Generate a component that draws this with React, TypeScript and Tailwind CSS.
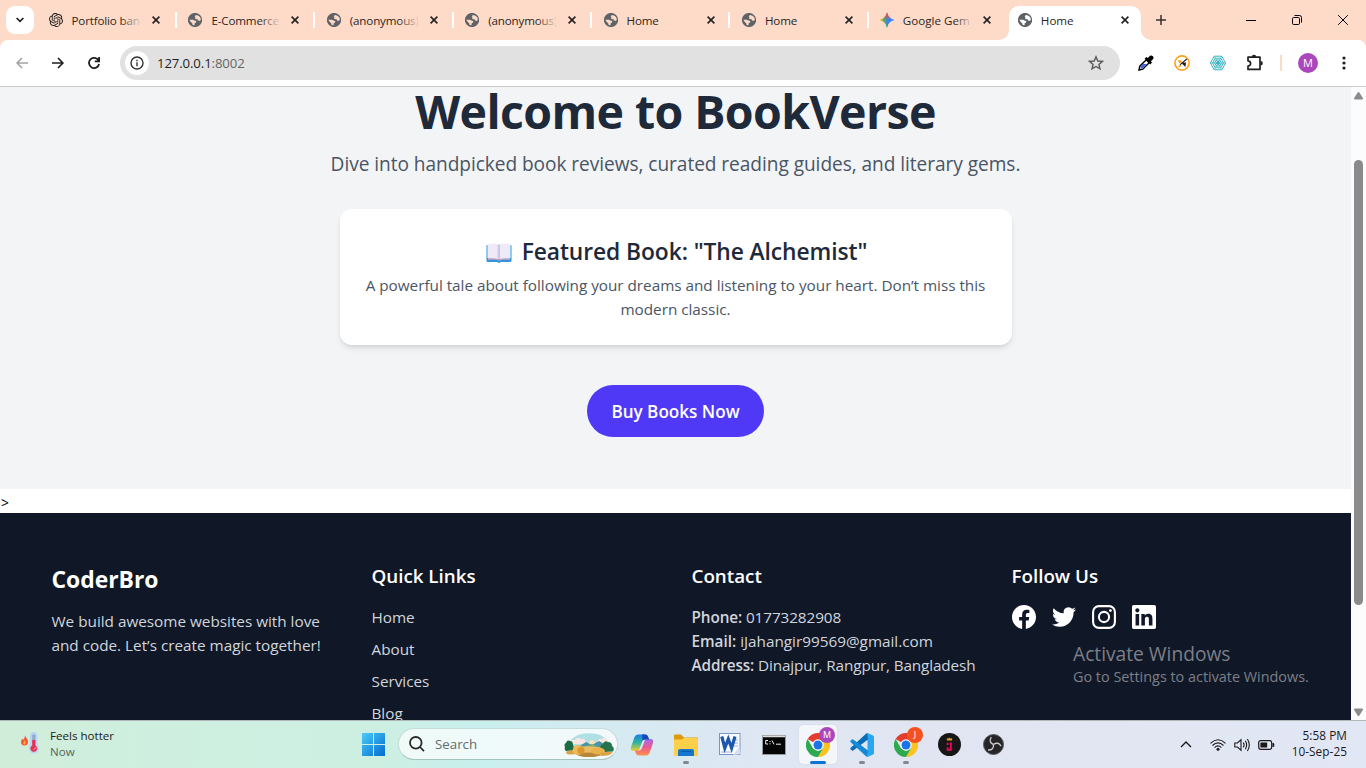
import type { ReactNode } from "react";
import { SiOpenai } from "react-icons/si";

function Globe({ light = "#fddbc8" }: { light?: string }) {
  return (
    <svg viewBox="0 0 14 14" className="size-[14px] shrink-0">
      <circle cx="7" cy="7" r="7.1" fill="#5f6368" />
      <g fill={light}>
        <path d="M8 2 10.6 2.7 12.4 4.6 12.9 7 11.2 7.9 9.9 7.3 9.6 6.2 7.6 5.9 6.8 5 7.7 4.2 6.6 3.2Z" />
        <path d="M1.3 6.8 4.9 6.7 6.4 7.4 8.3 7.9 8 9.4 6.7 10.2 6.5 12.2 4.6 11.9 4.4 10.4 3 9.3Z" />
      </g>
    </svg>
  );
}

function Gemini() {
  return (
    <svg viewBox="0 0 16 16" className="-ml-px size-[16px] shrink-0">
      <defs>
        <linearGradient id="gm" x1="0" y1="0.5" x2="1" y2="0.5">
          <stop offset="0" stopColor="#fbbc04" />
          <stop offset=".35" stopColor="#5aa469" />
          <stop offset=".55" stopColor="#3b82f6" />
          <stop offset="1" stopColor="#3186ff" />
        </linearGradient>
        <linearGradient id="gm2" x1="0.5" y1="0" x2="0.5" y2="1">
          <stop offset="0" stopColor="#f04a45" />
          <stop offset=".2" stopColor="#f04a45" />
          <stop offset=".45" stopColor="#f04a45" stopOpacity="0" />
          <stop offset=".7" stopColor="#22b45a" stopOpacity="0" />
          <stop offset="1" stopColor="#22b45a" />
        </linearGradient>
      </defs>
      <path d="M8 .3C9 4.6 11.4 7 15.7 8 11.4 9 9 11.4 8 15.7 7 11.4 4.6 9 .3 8 4.6 7 7 4.6 8 .3Z" fill="url(#gm)" />
      <path d="M8 .3C9 4.6 11.4 7 15.7 8 11.4 9 9 11.4 8 15.7 7 11.4 4.6 9 .3 8 4.6 7 7 4.6 8 .3Z" fill="url(#gm2)" />
    </svg>
  );
}

function Cross() {
  return (
    <svg viewBox="0 0 8 8" className="size-2 shrink-0" stroke="#222" strokeWidth="1.6">
      <path d="M.6.6 7.4 7.4M7.4.6.6 7.4" />
    </svg>
  );
}

function Tab({ icon, title, fade }: { icon: ReactNode; title: string; fade?: boolean }) {
  return (
    <div className="flex h-full w-[138.4px] shrink-0 items-center pl-[11.5px]">
      {icon}
      <div className="relative mt-px ml-[9px] w-[68px] overflow-hidden text-[11.6px] tracking-[-0.15px] whitespace-nowrap">
        {title}
        {fade && <span className="absolute inset-y-0 right-0 w-5 bg-linear-to-r from-[#fddbc8]/0 to-[#fddbc8]/90" />}
      </div>
      <div className="ml-[12px]">
        <Cross />
      </div>
      <div className="ml-auto h-4 w-0.5 bg-white" />
    </div>
  );
}

function TabStrip() {
  return (
    <div className="flex h-10 bg-[#fddbc8] text-[#2b2523]">
      <div className="mt-1.5 ml-1.5 flex size-7 shrink-0 items-center justify-center rounded-[9px] bg-white">
        <svg viewBox="0 0 8 6" className="w-2" fill="none" stroke="#1f1f1f" strokeWidth="1.7">
          <path d="M.6 1 4 4.4 7.4 1" />
        </svg>
      </div>
      <div className="ml-[4.5px] flex h-10">
        <Tab icon={<SiOpenai className="-ml-[1.5px] size-[14px] shrink-0 text-[#1b1b1b]" />} title="Portfolio ban" fade />
        <Tab icon={<Globe />} title="E-Commerce" fade />
        <Tab icon={<Globe />} title="(anonymous)" fade />
        <Tab icon={<Globe />} title="(anonymous)" fade />
        <Tab icon={<Globe />} title="Home" />
        <Tab icon={<Globe />} title="Home" />
        <div className="flex h-full w-[130px] items-center pl-[11px]">
          <Gemini />
          <div className="relative mt-px ml-[8px] w-[68px] overflow-hidden text-[11.6px] whitespace-nowrap">
            Google Gem
            <span className="absolute inset-y-0 right-0 w-4 bg-linear-to-r from-[#fddbc8]/0 to-[#fddbc8]/90" />
          </div>
          <div className="ml-[12.5px]">
            <Cross />
          </div>
        </div>
      </div>
      <svg viewBox="0 0 10 10" className="mt-[30px] size-[10px] shrink-0" fill="#fff">
        <path d="M10 0V10H0A10 10 0 0 0 10 0Z" />
      </svg>
      <div className="mt-1.5 flex h-[34px] w-[132px] shrink-0 items-center rounded-t-[10px] bg-white pb-1.5 pl-[9px]">
        <Globe light="#fff" />
        <span className="mt-px ml-[9px] w-[60px] text-[11.6px]">Home</span>
        <div className="ml-[20px]">
          <Cross />
        </div>
      </div>
      <svg viewBox="0 0 10 10" className="mt-[30px] size-[10px] shrink-0" fill="#fff">
        <path d="M0 0V10H10A10 10 0 0 1 0 0Z" />
      </svg>
      <svg viewBox="0 0 10 10" className="mt-[15px] ml-[5px] size-[10px]" stroke="#33302f" strokeWidth="1.5">
        <path d="M5 0V10M0 5H10" />
      </svg>
      <div className="ml-auto flex items-center pr-[18px] text-black">
        <div className="h-px w-[10px] bg-black" />
        <svg viewBox="0 0 10 10" className="ml-[36px] size-[10px]" fill="none" stroke="currentColor">
          <rect x=".5" y="2.5" width="7" height="7" rx="1.2" />
          <path d="M2.5.5H7.5A2 2 0 0 1 9.5 2.5V7.5" />
        </svg>
        <svg viewBox="0 0 10 10" className="ml-[36px] size-[10px]" stroke="currentColor" strokeWidth="1">
          <path d="M.2.2 9.8 9.8M9.8.2.2 9.8" />
        </svg>
      </div>
    </div>
  );
}

function Toolbar() {
  return (
    <div className="bg-[#fddbc8]">
      <div className="flex h-[47px] items-center rounded-t-lg border-b border-[#c8cacd] bg-white pl-4">
        <svg viewBox="0 0 12 12" className="size-3 shrink-0" fill="none" stroke="#a3a3a3" strokeWidth="1.6">
          <path d="M12 6H1.3M6 1 1.1 6 6 11" />
        </svg>
        <svg viewBox="0 0 12 12" className="ml-6 size-3 shrink-0" fill="none" stroke="#1f1f1f" strokeWidth="1.7">
          <path d="M0 6H10.7M6 1 10.9 6 6 11" />
        </svg>
        <svg viewBox="0 0 12 12" className="ml-6 size-3 shrink-0" fill="none" stroke="#1f1f1f" strokeWidth="1.8">
          <path d="M10.6 3.6A5.1 5.1 0 1 0 11.1 7M11.1 0V4.3H6.8" />
        </svg>
        <div className="ml-5 flex h-[34px] w-[1000px] shrink-0 items-center rounded-full bg-[#e1e1e1] pr-4 pl-[5px]">
          <div className="flex size-6 items-center justify-center rounded-full bg-white">
            <svg viewBox="0 0 14 14" className="size-[14px]" fill="none" stroke="#333" strokeWidth="1.4">
              <circle cx="7" cy="7" r="6" />
              <path d="M7 6.2V10.3M7 3.8V5.2" />
            </svg>
          </div>
          <div className="mt-px ml-2 text-[13.2px] tracking-[-0.12px] text-[#1f1f1f]">
            127.0.0.1<span className="text-[#666]">:8002</span>
          </div>
          <svg viewBox="0 0 16 16" className="ml-auto size-4" fill="none" stroke="#5a5a5a" strokeWidth="1.4">
            <path d="M8 1.8 9.8 6 14.4 6.4 10.9 9.4 12 13.9 8 11.5 4 13.9 5.1 9.4 1.6 6.4 6.2 6Z" />
          </svg>
        </div>
        <svg viewBox="0 0 16 16" className="ml-[18px] size-4 shrink-0">
          <path d="M1 15 1.8 11.2 8.3 4.8 11.2 7.7 4.8 14.2Z" fill="#fff" stroke="#000" strokeWidth="1.4" />
          <path d="M2.4 13.6 2.8 11.2 5 9H9L4.3 13.4Z" fill="#4064d8" />
          <path d="M6.6 3.8 8.4 2 9.8 3 12 .8A2.4 2.4 0 0 1 15.2 4.1L12.9 6.2 14 7.5 12.3 9.4Z" fill="#000" />
        </svg>
        <svg viewBox="0 0 16 16" className="ml-5 size-4 shrink-0">
          <circle cx="8" cy="8" r="7.1" fill="#fff" stroke="#f9a11b" strokeWidth="1.6" />
          <path d="M3.6 5.2 7 5.2 8 7.5 5.8 8.6Z" fill="#f9a11b" />
          <path d="M12.8 4 6 9.8M8.4 8.2 11.4 8 11 10.8Z" stroke="#222" strokeWidth="1.1" fill="#222" />
          <path d="M3.6 12.2 6 9.4 7.6 11.4Z" fill="#f9a11b" />
        </svg>
        <svg viewBox="0 0 16 16" className="ml-5 size-4 shrink-0" fill="none" stroke="#35b2c0" strokeWidth="1">
          <path d="M4.2 1.2H11.8L15.6 8 11.8 14.8H4.2L.4 8Z" />
          <path d="M5.2 3.2H10.8L13.4 8 10.8 12.8H5.2L2.6 8Z" />
          <path d="M6.2 5H9.8L11.4 8 9.8 11H6.2L4.6 8Z" />
          <path d="M4.2 1.2 11.8 14.8M11.8 1.2 4.2 14.8M.4 8H15.6" strokeWidth=".7" />
          <circle cx="8" cy="8" r="1.4" fill="#35b2c0" />
        </svg>
        <svg viewBox="0 0 18 18" className="ml-5 size-[18px] shrink-0" fill="none" stroke="#1f1f1f" strokeWidth="1.7">
          <path d="M2 3.2H14V15.4H2V12Q4.6 11.6 4.6 9.4T2 6.8Z" strokeLinejoin="round" />
          <path d="M5.8 2.9A2.2 2.2 0 0 1 10.2 2.9ZM14.6 7.1A2.2 2.2 0 0 1 14.6 11.5Z" fill="#1f1f1f" stroke="none" />
        </svg>
        <div className="ml-4 h-4 w-0.5 shrink-0 bg-[#fddbc8]" />
        <div className="ml-4 flex size-5 shrink-0 items-center justify-center rounded-full bg-[#ab47bc] text-[11px] text-white">M</div>
        <svg viewBox="0 0 4 14" className="ml-[24px] h-[14px] w-1 shrink-0" fill="#1f1f1f">
          <circle cx="2" cy="2" r="1.6" />
          <circle cx="2" cy="7" r="1.6" />
          <circle cx="2" cy="12" r="1.6" />
        </svg>
      </div>
    </div>
  );
}

function BookEmoji() {
  return (
    <svg viewBox="0 0 26 20" className="mt-[8px] mr-[10px] h-[20px] w-[26px]">
      <path d="M.5 3Q.5 2 2 2H24Q25.5 2 25.5 3V17.5Q25.5 19 24 19H15L13 20 11 19H2Q.5 19 .5 17.5Z" fill="#2f96dc" />
      <path d="M.5 3Q.5 2 2 2V15H.5ZM24 2Q25.5 2 25.5 3V15H24Z" fill="#8ccbee" />
      <path d="M2 15H24V17Q15 16 13 18 11 16 2 17Z" fill="#b9a3c4" />
      <path d="M2 1Q10 0 12.6 1.5V16Q9 14.8 2 15.3Z" fill="#efeaf8" />
      <path d="M24 1Q16 0 13.4 1.5V16Q17 14.8 24 15.3Z" fill="#efeaf8" />
      <path d="M11.6 1.2 12.9 1.5V16L11.6 15.5ZM13.2 1.5 14 1.3V15.6L13.2 16Z" fill="#d3c7e6" />
    </svg>
  );
}

function Hero() {
  return (
    <section className="-mt-[2px] flex h-[404px] flex-col items-center bg-gray-100 text-center">
      <h1 className="mb-3 text-[46.5px] leading-[52px] font-bold tracking-[-0.6px] text-gray-800">Welcome to BookVerse</h1>
      <p className="mb-[30px] text-[19.1px] leading-[30px] tracking-[-0.05px] text-gray-600">
        Dive into handpicked book reviews, curated reading guides, and literary gems.
      </p>
      <div className="h-[136px] w-[672px] rounded-xl bg-white px-6 pt-[26px] shadow-md">
        <h2 className="mb-1 flex justify-center pl-0.5 text-[22.8px] leading-[34px] font-semibold tracking-[-0.08px] text-gray-800">
          <BookEmoji />
          Featured Book: "The Alchemist"
        </h2>
        <p className="text-[15.3px] leading-6 tracking-[-0.02px] text-gray-600">
          A powerful tale about following your dreams and listening to your heart. Don’t miss this
          <br />
          modern classic.
        </p>
      </div>
      <button className="mt-10 h-[52px] w-[177px] rounded-full bg-[#4f39f6] pt-0.5 text-[17.1px] font-semibold text-white">
        Buy Books Now
      </button>
    </section>
  );
}

function Socials() {
  return (
    <div className="flex gap-4">
      <svg viewBox="0 0 24 24" className="size-6" fill="#fff">
        <path d="M24 12.073c0-6.627-5.373-12-12-12s-12 5.373-12 12c0 5.99 4.388 10.954 10.125 11.854v-8.385H7.078v-3.47h3.047V9.43c0-3.007 1.792-4.669 4.533-4.669 1.312 0 2.686.235 2.686.235v2.953H15.83c-1.491 0-1.956.925-1.956 1.874v2.25h3.328l-.532 3.47h-2.796v8.385C19.612 23.027 24 18.062 24 12.073z" />
      </svg>
      <svg viewBox="0 0 24 24" className="size-6" fill="#fff">
        <path d="M23.953 4.57a10 10 0 01-2.825.775 4.958 4.958 0 002.163-2.723c-.951.555-2.005.959-3.127 1.184a4.92 4.92 0 00-8.384 4.482C7.69 8.095 4.067 6.13 1.64 3.162a4.822 4.822 0 00-.666 2.475c0 1.71.87 3.213 2.188 4.096a4.904 4.904 0 01-2.228-.616v.06a4.923 4.923 0 003.946 4.827 4.996 4.996 0 01-2.212.085 4.936 4.936 0 004.604 3.417 9.867 9.867 0 01-6.102 2.105c-.39 0-.779-.023-1.17-.067a13.995 13.995 0 007.557 2.209c9.053 0 13.998-7.496 13.998-13.985 0-.21 0-.42-.015-.63A9.935 9.935 0 0024 4.59z" />
      </svg>
      <svg viewBox="0 0 24 24" className="size-6" fill="none" stroke="#fff" strokeWidth="2.1">
        <rect x="1.1" y="1.1" width="21.8" height="21.8" rx="6" />
        <circle cx="12" cy="12" r="5.1" />
        <circle cx="18.4" cy="5.6" r="1.4" fill="#fff" stroke="none" />
      </svg>
      <svg viewBox="0 0 24 24" className="size-6" fill="#fff">
        <path d="M20.447 20.452h-3.554v-5.569c0-1.328-.027-3.037-1.852-3.037-1.853 0-2.136 1.445-2.136 2.939v5.667H9.351V9h3.414v1.561h.046c.477-.9 1.637-1.85 3.37-1.85 3.601 0 4.267 2.37 4.267 5.455v6.286zM5.337 7.433c-1.144 0-2.063-.926-2.063-2.065 0-1.138.92-2.063 2.063-2.063 1.14 0 2.064.925 2.064 2.063 0 1.139-.925 2.065-2.064 2.065zm1.782 13.019H3.555V9h3.564v11.452zM22.225 0H1.771C.792 0 0 .774 0 1.729v20.542C0 23.227.792 24 1.771 24h20.451C23.2 24 24 23.227 24 22.271V1.729C24 .774 23.2 0 22.222 0h.003z" />
      </svg>
    </div>
  );
}

function Footer() {
  return (
    <footer className="relative h-[207px] bg-[#101828] text-gray-300">
      <div className="mx-auto grid max-w-7xl grid-cols-4 gap-8 px-4 pt-[49px] text-[15.3px] leading-6 tracking-[-0.01px] whitespace-nowrap">
        <div>
          <h2 className="mb-[13px] pt-px text-[22.9px] leading-[33px] font-bold text-white">CoderBro</h2>
          <p>
            We build awesome websites with love
            <br />
            and code. Let’s create magic together!
          </p>
        </div>
        <div>
          <h3 className="mb-[15px] text-[18.8px] leading-7 font-semibold text-white">Quick Links</h3>
          <ul className="space-y-2">
            <li>Home</li>
            <li>About</li>
            <li>Services</li>
            <li>Blog</li>
          </ul>
        </div>
        <div>
          <h3 className="mb-[15px] text-[18.8px] leading-7 font-semibold text-white">Contact</h3>
          <p className="tracking-[-0.1px]"><b className="font-semibold">Phone:</b> 01773282908</p>
          <p><b className="font-semibold">Email:</b> iJahangir99569@gmail.com</p>
          <p className="tracking-[-0.13px]"><b className="font-semibold">Address:</b> Dinajpur, Rangpur, Bangladesh</p>
        </div>
        <div>
          <h3 className="mb-[15px] text-[18.8px] leading-7 font-semibold text-white">Follow Us</h3>
          <Socials />
        </div>
      </div>
      <div className="absolute top-[127px] left-[1073px] whitespace-nowrap text-[#7c7f86]">
        <div className="text-[19.2px] leading-7">Activate Windows</div>
        <div className="text-[14.4px] leading-[18px]">Go to Settings to activate Windows.</div>
      </div>
    </footer>
  );
}

function Scrollbar() {
  return (
    <div className="flex w-[15px] shrink-0 flex-col items-center bg-[#fcfcfc]">
      <svg viewBox="0 0 9 8" className="mt-[5px] h-2 w-[9px]" fill="#8b8b8b">
        <path d="M4.5 0Q5 0 5.4.6L8.8 6Q9.4 7.5 8 7.5H1Q-.4 7.5.2 6L3.6.6Q4 0 4.5 0Z" />
      </svg>
      <div className="mt-[60px] h-[445px] w-[9px] rounded-full bg-[#8b8b8b]" />
      <svg viewBox="0 0 9 8" className="mt-auto mb-1 h-2 w-[9px] rotate-180" fill="#8b8b8b">
        <path d="M4.5 0Q5 0 5.4.6L8.8 6Q9.4 7.5 8 7.5H1Q-.4 7.5.2 6L3.6.6Q4 0 4.5 0Z" />
      </svg>
    </div>
  );
}

function TaskIcon({ children, dot, active }: { children: ReactNode; dot?: boolean; active?: boolean }) {
  return (
    <div
      className={
        "relative flex h-[39px] w-[38px] shrink-0 items-center justify-center rounded-[4px] " +
        (active ? "bg-white/65 shadow-[0_0_1px_rgba(0,0,0,.25)]" : "")
      }
    >
      {children}
      {dot && <span className="absolute bottom-0 left-4 h-[3px] w-1.5 rounded-full bg-[#83888f]" />}
      {active && <span className="absolute bottom-0 left-[11px] h-[3px] w-4 rounded-full bg-[#0a74d4]" />}
    </div>
  );
}

function ChromeLogo() {
  return (
    <svg viewBox="0 0 24 24" className="size-6">
      <path d="M12 12 1.6 6A12 12 0 0 1 22.4 6Z" fill="#e33b2e" />
      <path d="M12 12 22.4 6A12 12 0 0 1 12 24L17.2 15Z" fill="#fcc31e" />
      <path d="M1.6 6 6.8 15 12 18 17.2 15 12 24A12 12 0 0 1 1.6 6Z" fill="#2da94f" />
      <path d="M12 6.5H22.6L22.4 6H12Z" fill="#e33b2e" />
      <circle cx="12" cy="12" r="5.7" fill="#fff" />
      <circle cx="12" cy="12" r="4.5" fill="#1a73e8" />
    </svg>
  );
}

function Taskbar() {
  return (
    <div className="flex h-12 border-t border-[#aeb8b8] bg-[linear-gradient(90deg,#d0edd8_0%,#ceefe0_12%,#cdefe2_28%,#c8efee_35%,#d5eaf1_44%,#dde7f3_55%,#e1e5f1_68%,#e2e7f5_100%)]">
      <div className="flex w-[361px] shrink-0 pt-px">
        <svg viewBox="0 0 18 22" className="mt-[10px] ml-[21px] h-[22px] w-[18px]">
          <path d="M4 3.5Q5 5.5 6 6.8 7 8 7 10A3.4 3.4 0 0 1 0 10Q0 8 1.5 6.4L2 8Q4 6.5 4 3.5Z" fill="#ef5a35" />
          <path d="M3.6 8Q5.6 10 4.6 12.2A1.7 1.7 0 0 1 2 11Q2.8 10 3.6 8Z" fill="#f9a13d" />
          <rect x="9" y="0" width="7.4" height="20" rx="3.7" fill="#b9d4f7" />
          <circle cx="12.8" cy="16.4" r="5" fill="#b9d4f7" />
          <rect x="11.3" y="2.5" width="3" height="9" fill="#8da8cb" />
          <path d="M11.2 8H14.4V13.4A3.4 3.4 0 1 1 11.2 13.4Z" fill="#e8304f" />
          <path d="M13 17.5 15 15.5" stroke="#fff" strokeWidth=".9" />
        </svg>
        <div className="ml-[11px] pt-[6px] text-[11.6px] leading-4 text-[#1c2220]">
          <div>Feels hotter</div>
          <div className="text-[#56655e]">Now</div>
        </div>
      </div>
      <div className="flex pt-[12px] pl-px">
        <svg viewBox="0 0 23 23" className="size-[23px]">
          <defs>
            <linearGradient id="win" x1="0" y1="0" x2="1" y2="1">
              <stop offset="0" stopColor="#4ccbfa" />
              <stop offset="1" stopColor="#036cce" />
            </linearGradient>
          </defs>
          <path d="M0 0H11V11H0ZM12 0H23V11H12ZM0 12H11V23H0ZM12 12H23V23H12Z" fill="url(#win)" />
        </svg>
      </div>
      <div className="mt-[7px] ml-[13px] flex h-[32px] w-[220px] shrink-0 items-center rounded-full border border-b-[#a6c4bf] border-[#c4ddd9] bg-white/70 pl-[10px]">
        <svg viewBox="0 0 16 16" className="size-4" fill="none" stroke="#2a2a2a" strokeWidth="1.8">
          <circle cx="6.8" cy="6.8" r="5.8" />
          <path d="M11 11 15 15.2" />
        </svg>
        <span className="mt-0.5 ml-[10px] text-[13.3px] text-[#636b6c]">Search</span>
        <svg viewBox="0 0 50 24" className="mt-[1px] mr-[3px] ml-auto h-6 w-[50px]">
          <defs>
            <clipPath id="scene">
              <ellipse cx="25" cy="12.2" rx="20" ry="12" />
            </clipPath>
          </defs>
          <g clipPath="url(#scene)">
            <rect width="50" height="24" fill="#aee0e4" />
            <circle cx="28" cy="10" r="3" fill="#fbe0b8" />
            <path d="M6 11Q6 6 11 7 13 3 17 6 22 5 22 11ZM33 10Q34 5 38 6 41 3 44 8V12H32Z" fill="#f7e6e4" />
            <path d="M14 14 22 9 28 12 35 8 44 13V16H12Z" fill="#4b94a8" />
            <path d="M20 14 28 11 34 14V17H18Z" fill="#7fb070" />
            <path d="M6 15Q25 11 46 16V24H6Z" fill="#e9bb62" />
            <path d="M8 21Q25 18 42 21V24H8Z" fill="#b8863a" />
          </g>
          <path d="M1 14Q-.5 11 2 10 3 6.5 6 8 9 8 9 12 11 15 8 17.5L2 18Q0 17 1 14Z" fill="#1d6b45" />
          <path d="M37 16Q35 12 39 11 40 7 44 9 48 9 48 13 51 15 49 18.5L40 19Z" fill="#24734a" />
          <ellipse cx="7" cy="19.5" rx="5" ry="2" fill="#d9a54c" />
          <ellipse cx="14" cy="17" rx="5.2" ry="5" fill="#f0b954" />
          <circle cx="17" cy="17.5" r="3.6" fill="#d99734" />
          <ellipse cx="34" cy="18" rx="7" ry="3.6" fill="#eab04a" />
          <path d="M36 20.5Q44 17.5 49 19.5 46 23 37 23Z" fill="#dba348" />
        </svg>
      </div>
      <div className="ml-[5px] flex gap-[6px] pt-[4px]">
        <TaskIcon>
          <svg viewBox="0 0 24 24" className="size-6">
            <defs>
              <linearGradient id="cpa" x1="0" y1="0" x2="0" y2="1">
                <stop offset="0" stopColor="#1b7fe4" />
                <stop offset=".5" stopColor="#2fb4a0" />
                <stop offset="1" stopColor="#f3cf2b" />
              </linearGradient>
              <linearGradient id="cpb" x1="0" y1="0" x2="0" y2="1">
                <stop offset="0" stopColor="#a06be8" />
                <stop offset=".5" stopColor="#ee5a95" />
                <stop offset="1" stopColor="#fb9446" />
              </linearGradient>
            </defs>
            <path d="M8 1.5H15.5Q17.5 1.5 18.2 4L19 6.5H15Q13 6.5 12 9L9.5 16Q9 18 6.5 18H3.5Q0 18 1 14L4.5 4Q5.5 1.5 8 1.5Z" fill="url(#cpa)" />
            <path d="M16 22.5H8.5Q6.5 22.5 5.8 20L5 17.5H9Q11 17.5 12 15L14.5 8Q15 6 17.5 6H20.5Q24 6 23 10L19.5 20Q18.5 22.5 16 22.5Z" fill="url(#cpb)" />
            <path d="M12 1.5H15.5Q17.5 1.5 18.2 4L19 6.5H15Q13.4 6.5 12.6 7.6Z" fill="#1947c4" />
          </svg>
        </TaskIcon>
        <TaskIcon dot>
          <svg viewBox="0 0 24 22" className="h-[22px] w-6">
            <path d="M0 1.5Q0 .5 1 .5H7L10 3.5H23Q24 3.5 24 4.5V10H0Z" fill="#dc9a0f" />
            <path d="M0 5.5H8L10 4H23Q24 4 24 5V20.5Q24 22 22.5 22H1.5Q0 22 0 20.5Z" fill="#fdcf4a" />
            <path d="M4 22V17Q4 15 6 15H18Q20 15 20 17V22Z" fill="#1477cd" />
            <path d="M7 17.5H17" stroke="#0b5aa6" />
          </svg>
        </TaskIcon>
        <TaskIcon>
          <svg viewBox="0 0 24 24" className="-mt-0.5 size-6">
            <rect x="1.5" y="1.5" width="20.5" height="21" fill="#f8fbff" stroke="#7b96c3" />
            <path d="M15 8H20M15 11H20M16 14H20M3 20H14" stroke="#9eb3d4" />
            <path d="M15 23 21 15 23 22Z" fill="#d7e0ee" />
            <path d="M3.8 4.5 6.8 16 10.3 7 13.6 16 17 4.5" fill="none" stroke="#1d56ad" strokeWidth="3.2" />
          </svg>
        </TaskIcon>
        <TaskIcon>
          <svg viewBox="0 0 24 20" className="h-5 w-6">
            <rect x=".5" y=".5" width="23" height="19" fill="#050505" stroke="#999" />
            <path d="M1 1.5H23" stroke="#ddd" strokeWidth="1.5" />
            <path d="M6 5.5H3.7V9H6M8 6V7M8 8.3V9.3M10 5.5 12 9.3M14 9.2H19" stroke="#eee" fill="none" />
          </svg>
        </TaskIcon>
        <TaskIcon active>
          <ChromeLogo />
          <span className="absolute top-[2px] left-[20px] flex size-4 items-center justify-center rounded-full bg-[#ab47bc] text-[9px] text-white">M</span>
        </TaskIcon>
        <TaskIcon dot>
          <svg viewBox="0 0 24 24" className="size-6">
            <path d="M17.5 0 23 2.5Q24 3 24 4V20Q24 21 23 21.5L17.5 24Z" fill="#2aa5ef" />
            <path d="M17.5 0Q16.5 0 16 .8L.5 15Q0 15.7.5 16.3L2 17.6Q2.7 18 3.3 17.6L18 6.5Z" fill="#0b6db8" />
            <path d="M17.5 24Q16.5 24 16 23.2L.5 9Q0 8.3.5 7.7L2 6.4Q2.7 6 3.3 6.4L18 17.5Z" fill="#1489d5" />
          </svg>
        </TaskIcon>
        <TaskIcon dot>
          <ChromeLogo />
          <span className="absolute top-[2px] left-[20px] flex size-4 items-center justify-center rounded-full bg-[#f4511e] text-[9px] text-white">J</span>
        </TaskIcon>
        <TaskIcon>
          <svg viewBox="0 0 22 22" className="-ml-px size-[23px]">
            <circle cx="11" cy="11" r="11" fill="#181516" />
            <path d="M8.5 4.7 9.8 5.6 11 4.3 12.2 5.6 13.5 4.7V7.2H8.5Z" fill="#d9a521" />
            <path d="M9.2 9.4V11.4M12.3 9V16.2H9.2V13.6" stroke="#ed0a5c" strokeWidth="1.7" fill="none" />
          </svg>
        </TaskIcon>
        <TaskIcon>
          <svg viewBox="0 0 22 22" className="-ml-px size-[21px]">
            <circle cx="11" cy="11" r="10.5" fill="#252427" stroke="#5b595c" />
            <g fill="none" stroke="#cbc8ca" strokeWidth="1.5">
              <path d="M11 11Q5.5 8.5 8.6 3.2" />
              <path d="M11 11Q15.9 7.5 18.9 12.8" />
              <path d="M11 11Q11.5 17 5.3 16.8" />
            </g>
          </svg>
        </TaskIcon>
      </div>
      <div className="ml-auto flex items-center text-[#1a1a1a]">
        <svg viewBox="0 0 12 7" className="h-[7px] w-3" fill="none" stroke="currentColor" strokeWidth="1.4">
          <path d="M1 6 6 1 11 6" />
        </svg>
        <svg viewBox="0 0 16 12" className="ml-[18px] h-3 w-4" fill="none" stroke="currentColor" strokeWidth="1.1">
          <path d="M.5 4.3Q8-2.8 15.5 4.3M2.5 6.5Q8 1.3 13.5 6.5M4.6 8.6Q8 5.3 11.4 8.6" />
          <circle cx="8" cy="10.3" r="1.5" fill="currentColor" stroke="none" />
        </svg>
        <svg viewBox="0 0 17 14" className="ml-2 h-[14px] w-[17px]" fill="none" stroke="currentColor" strokeWidth="1.1">
          <path d="M.8 5H3.4L7 1.8V12.2L3.4 9H.8Z" />
          <path d="M9.3 4.6Q10.9 7 9.3 9.4M11.3 2.8Q14 7 11.3 11.2M13.4 1Q17.2 7 13.4 13" />
        </svg>
        <svg viewBox="0 0 17 10" className="ml-[7px] h-[10px] w-[17px]">
          <rect x=".7" y=".7" width="13" height="8.6" rx="2" fill="none" stroke="currentColor" strokeWidth="1.2" />
          <rect x="2.4" y="2.4" width="6.8" height="5.2" rx=".6" fill="currentColor" />
          <path d="M14.5 3H15.4Q16.4 3 16.4 5T15.4 7H14.5Z" fill="currentColor" />
        </svg>
        <div className="mr-[19px] mb-[3px] ml-[15px] w-[57px] text-right text-[11.8px] leading-4 tracking-[0.05px] whitespace-nowrap">
          <div>5:58 PM</div>
          <div>10-Sep-25</div>
        </div>
      </div>
    </div>
  );
}

export default function App() {
  return (
    <div className="flex h-[768px] w-[1366px] flex-col overflow-hidden bg-white font-['Open_Sans',sans-serif]">
      <TabStrip />
      <Toolbar />
      <div className="flex h-[633px] shrink-0 overflow-hidden">
        <main className="w-[1351px] overflow-hidden">
          <Hero />
          <div className="h-6 pl-px text-[14px] leading-[27px] text-black">&gt;</div>
          <Footer />
        </main>
        <Scrollbar />
      </div>
      <Taskbar />
    </div>
  );
}
